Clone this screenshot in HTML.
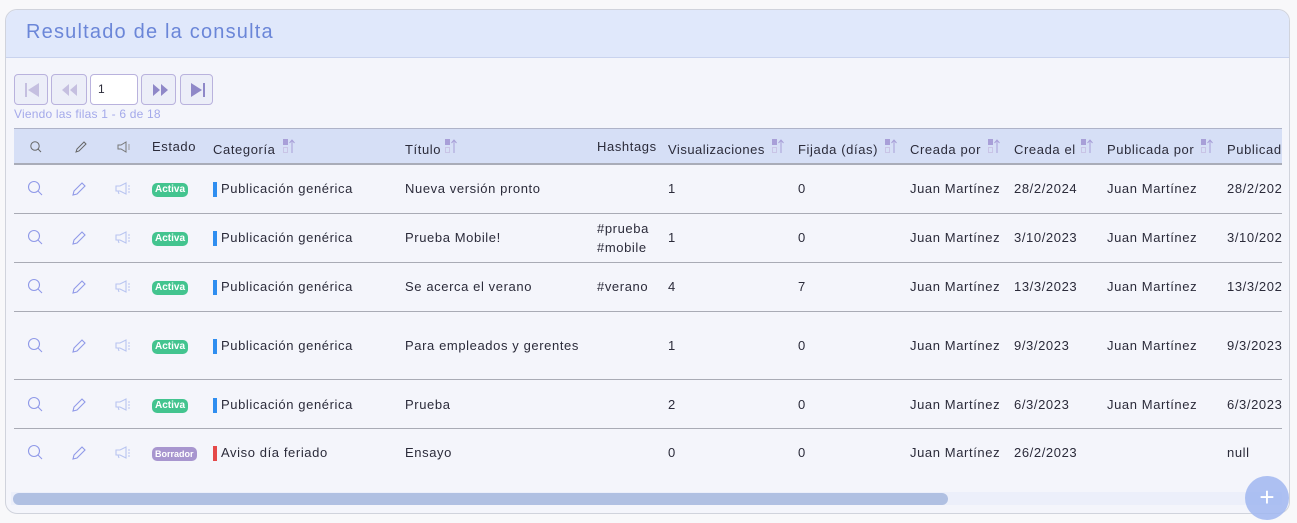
<!DOCTYPE html>
<html><head><meta charset="utf-8">
<style>
*{margin:0;padding:0;box-sizing:border-box}
body{width:1297px;height:523px;background:#f8f8fa;font-family:"Liberation Sans",sans-serif;position:relative;overflow:hidden;color:#2b2b3a}
.card{position:absolute;left:5px;top:9px;width:1285px;height:505px;border:1px solid #d0d3dc;border-radius:12px;background:#f4f5fb;overflow:hidden}
.hd{position:absolute;left:0;top:0;width:100%;height:48px;background:#e0e8fb;border-bottom:1px solid #c9d3ee}
.hd span{position:absolute;left:20px;top:11px;font-size:20px;color:#6b86d8;letter-spacing:1.2px;font-weight:400}
.btn{position:absolute;top:64px;height:31px;border:1px solid #b9b2dd;border-radius:4px;background:#eceef8}
.a{position:absolute;font-size:13px;white-space:nowrap;letter-spacing:0.6px}
.th{position:absolute;left:8px;top:118px;width:1268px;height:37px;background:#d6dff6;border-top:1px solid #aeb3c8;border-bottom:2px solid #a9acb8}
.line{position:absolute;left:8px;width:1268px;height:1px;background:#a9abb5}
.badge{position:absolute;font-size:10px;font-weight:bold;color:#fff;border-radius:5px;padding:1px 3px;line-height:12px}
.bar{position:absolute;width:4px;height:15px}
.so{position:absolute;width:14px;height:16px}
</style></head><body>
<div class="card">
<div class="hd"><span>Resultado de la consulta</span></div>
<div class="btn" style="left:8px;width:34px"><svg width="34" height="31"><rect x="10" y="8" width="2" height="14" fill="#c5bfe0"/><path d="M24 8 L13 15 L24 22Z" fill="#c5bfe0"/></svg></div>
<div class="btn" style="left:45px;width:36px"><svg width="36" height="31"><path d="M17 9 L10 15 L17 21Z M25 9 L18 15 L25 21Z" fill="#c5bfe0"/></svg></div>
<div class="btn" style="left:84px;width:48px;background:#fff"><span class="a" style="left:7px;top:7px;font-size:12px">1</span></div>
<div class="btn" style="left:135px;width:35px"><svg width="35" height="31"><path d="M11 9 L18 15 L11 21Z M19 9 L26 15 L19 21Z" fill="#8f88c8"/></svg></div>
<div class="btn" style="left:174px;width:33px"><svg width="33" height="31"><path d="M10 8 L21 15 L10 22Z" fill="#8f88c8"/><rect x="22" y="8" width="2" height="14" fill="#8f88c8"/></svg></div>
<span class="a" style="left:8px;top:97px;font-size:12px;color:#a4a9ea;letter-spacing:0.2px">Viendo las filas 1 - 6 de 18</span>

<div class="th"></div>
<svg style="position:absolute;left:23px;top:130px" width="14" height="14"><circle cx="6" cy="6" r="4.2" fill="none" stroke="#666" stroke-width="1"/><path d="M9 9 L12 12" stroke="#666"/></svg>
<svg style="position:absolute;left:68px;top:130px" width="14" height="14"><path d="M2 12 L3 9 L10 2 L12 4 L5 11Z" fill="none" stroke="#666"/></svg>
<svg style="position:absolute;left:110px;top:130px" width="16" height="14"><path d="M2 5 H5 L10 2 V12 L5 9 H2Z" fill="none" stroke="#777"/><path d="M12 5h2M12 7h2M12 9h2" stroke="#999"/></svg>
<span class="a" style="left:146px;top:129px">Estado</span>
<span class="a" style="left:207px;top:132px">Categoría</span>
<span class="a" style="left:399px;top:132px">Título</span>
<span class="a" style="left:591px;top:129px">Hashtags</span>
<span class="a" style="left:662px;top:132px;letter-spacing:0.5px">Visualizaciones</span>
<span class="a" style="left:792px;top:132px">Fijada (días)</span>
<span class="a" style="left:904px;top:132px">Creada por</span>
<span class="a" style="left:1008px;top:132px">Creada el</span>
<span class="a" style="left:1101px;top:132px">Publicada por</span>
<span class="a" style="left:1221px;top:132px">Publicada el</span>
<svg class="so" style="left:276px;top:128px"><rect x="1" y="1" width="5" height="6" fill="#a89fd8"/><rect x="1.5" y="9.5" width="4" height="5" fill="none" stroke="#c9c4e6"/><path d="M10 15 V2 M7.5 5 L10 2 L12.5 5" stroke="#a89fd8" fill="none"/></svg>
<svg class="so" style="left:438px;top:128px"><rect x="1" y="1" width="5" height="6" fill="#a89fd8"/><rect x="1.5" y="9.5" width="4" height="5" fill="none" stroke="#c9c4e6"/><path d="M10 15 V2 M7.5 5 L10 2 L12.5 5" stroke="#a89fd8" fill="none"/></svg>
<svg class="so" style="left:765px;top:128px"><rect x="1" y="1" width="5" height="6" fill="#a89fd8"/><rect x="1.5" y="9.5" width="4" height="5" fill="none" stroke="#c9c4e6"/><path d="M10 15 V2 M7.5 5 L10 2 L12.5 5" stroke="#a89fd8" fill="none"/></svg>
<svg class="so" style="left:878px;top:128px"><rect x="1" y="1" width="5" height="6" fill="#a89fd8"/><rect x="1.5" y="9.5" width="4" height="5" fill="none" stroke="#c9c4e6"/><path d="M10 15 V2 M7.5 5 L10 2 L12.5 5" stroke="#a89fd8" fill="none"/></svg>
<svg class="so" style="left:981px;top:128px"><rect x="1" y="1" width="5" height="6" fill="#a89fd8"/><rect x="1.5" y="9.5" width="4" height="5" fill="none" stroke="#c9c4e6"/><path d="M10 15 V2 M7.5 5 L10 2 L12.5 5" stroke="#a89fd8" fill="none"/></svg>
<svg class="so" style="left:1074px;top:128px"><rect x="1" y="1" width="5" height="6" fill="#a89fd8"/><rect x="1.5" y="9.5" width="4" height="5" fill="none" stroke="#c9c4e6"/><path d="M10 15 V2 M7.5 5 L10 2 L12.5 5" stroke="#a89fd8" fill="none"/></svg>
<svg class="so" style="left:1194px;top:128px"><rect x="1" y="1" width="5" height="6" fill="#a89fd8"/><rect x="1.5" y="9.5" width="4" height="5" fill="none" stroke="#c9c4e6"/><path d="M10 15 V2 M7.5 5 L10 2 L12.5 5" stroke="#a89fd8" fill="none"/></svg>
<div style="position:absolute;left:1276px;top:118px;width:9px;height:370px;background:#f4f5fb"></div>

<div class="line" style="top:203px"></div>
<div class="line" style="top:252px"></div>
<div class="line" style="top:301px"></div>
<div class="line" style="top:369px"></div>
<div class="line" style="top:418px"></div>

<svg style="position:absolute;left:0;top:0" width="140" height="480">
<g fill="none" stroke="#8f99e8" stroke-width="1.1">
<g id="r"><circle cx="28" cy="177" r="5.5"/><path d="M32 181 L36 185"/><path d="M67 185 L68 181 L76 173 L79 176 L71 184Z"/></g>
<use href="#r" y="49"/><use href="#r" y="98"/><use href="#r" y="157"/><use href="#r" y="216"/><use href="#r" y="264"/>
</g>
<g fill="none" stroke="#b8c4f0" stroke-width="1.1">
<g id="m"><path d="M110 176 H114 L120 173 V184 L114 181 H110Z M112 181 L113 184"/><path d="M122 176h2M122 179h2M122 182h2"/></g>
<use href="#m" y="49"/><use href="#m" y="98"/><use href="#m" y="157"/><use href="#m" y="216"/><use href="#m" y="264"/>
</g>
</svg>

<span class="badge" style="left:146px;top:173px;background:#43c48f">Activa</span>
<span class="badge" style="left:146px;top:222px;background:#43c48f">Activa</span>
<span class="badge" style="left:146px;top:271px;background:#43c48f">Activa</span>
<span class="badge" style="left:146px;top:330px;background:#43c48f">Activa</span>
<span class="badge" style="left:146px;top:389px;background:#43c48f">Activa</span>
<span class="badge" style="left:146px;top:437px;background:#a896cf;font-size:9px">Borrador</span>
<div class="bar" style="left:207px;top:172px;background:#2f8ef0"></div>
<div class="bar" style="left:207px;top:221px;background:#2f8ef0"></div>
<div class="bar" style="left:207px;top:270px;background:#2f8ef0"></div>
<div class="bar" style="left:207px;top:329px;background:#2f8ef0"></div>
<div class="bar" style="left:207px;top:388px;background:#2f8ef0"></div>
<div class="bar" style="left:207px;top:436px;background:#e54848"></div>

<span class="a" style="left:215px;top:171px">Publicación genérica</span><span class="a" style="left:399px;top:171px">Nueva versión pronto</span><span class="a" style="left:662px;top:171px">1</span><span class="a" style="left:792px;top:171px">0</span><span class="a" style="left:904px;top:171px">Juan Martínez</span><span class="a" style="left:1008px;top:171px">28/2/2024</span><span class="a" style="left:1101px;top:171px">Juan Martínez</span><span class="a" style="left:1221px;top:171px">28/2/2024</span>
<span class="a" style="left:215px;top:220px">Publicación genérica</span><span class="a" style="left:399px;top:220px">Prueba Mobile!</span><span class="a" style="left:591px;top:211px">#prueba</span><span class="a" style="left:591px;top:230px">#mobile</span><span class="a" style="left:662px;top:220px">1</span><span class="a" style="left:792px;top:220px">0</span><span class="a" style="left:904px;top:220px">Juan Martínez</span><span class="a" style="left:1008px;top:220px">3/10/2023</span><span class="a" style="left:1101px;top:220px">Juan Martínez</span><span class="a" style="left:1221px;top:220px">3/10/2023</span>
<span class="a" style="left:215px;top:269px">Publicación genérica</span><span class="a" style="left:399px;top:269px">Se acerca el verano</span><span class="a" style="left:591px;top:269px">#verano</span><span class="a" style="left:662px;top:269px">4</span><span class="a" style="left:792px;top:269px">7</span><span class="a" style="left:904px;top:269px">Juan Martínez</span><span class="a" style="left:1008px;top:269px">13/3/2023</span><span class="a" style="left:1101px;top:269px">Juan Martínez</span><span class="a" style="left:1221px;top:269px">13/3/2023</span>
<span class="a" style="left:215px;top:328px">Publicación genérica</span><span class="a" style="left:399px;top:328px">Para empleados y gerentes</span><span class="a" style="left:662px;top:328px">1</span><span class="a" style="left:792px;top:328px">0</span><span class="a" style="left:904px;top:328px">Juan Martínez</span><span class="a" style="left:1008px;top:328px">9/3/2023</span><span class="a" style="left:1101px;top:328px">Juan Martínez</span><span class="a" style="left:1221px;top:328px">9/3/2023</span>
<span class="a" style="left:215px;top:387px">Publicación genérica</span><span class="a" style="left:399px;top:387px">Prueba</span><span class="a" style="left:662px;top:387px">2</span><span class="a" style="left:792px;top:387px">0</span><span class="a" style="left:904px;top:387px">Juan Martínez</span><span class="a" style="left:1008px;top:387px">6/3/2023</span><span class="a" style="left:1101px;top:387px">Juan Martínez</span><span class="a" style="left:1221px;top:387px">6/3/2023</span>
<span class="a" style="left:215px;top:435px">Aviso día feriado</span><span class="a" style="left:399px;top:435px">Ensayo</span><span class="a" style="left:662px;top:435px">0</span><span class="a" style="left:792px;top:435px">0</span><span class="a" style="left:904px;top:435px">Juan Martínez</span><span class="a" style="left:1008px;top:435px">26/2/2023</span><span class="a" style="left:1221px;top:435px">null</span>
<div style="position:absolute;left:1276px;top:155px;width:9px;height:330px;background:#f4f5fb"></div>

<div style="position:absolute;left:5px;top:482px;width:1271px;height:13px;background:#eceffa"></div>
<div style="position:absolute;left:7px;top:483px;width:935px;height:12px;border-radius:6px;background:#b0c0e2"></div>
</div>
<div style="position:absolute;left:1245px;top:476px;width:44px;height:44px;border-radius:50%;background:rgba(160,182,240,0.85);color:#fff;font-size:26px;line-height:42px;text-align:center">+</div>
</body></html>
